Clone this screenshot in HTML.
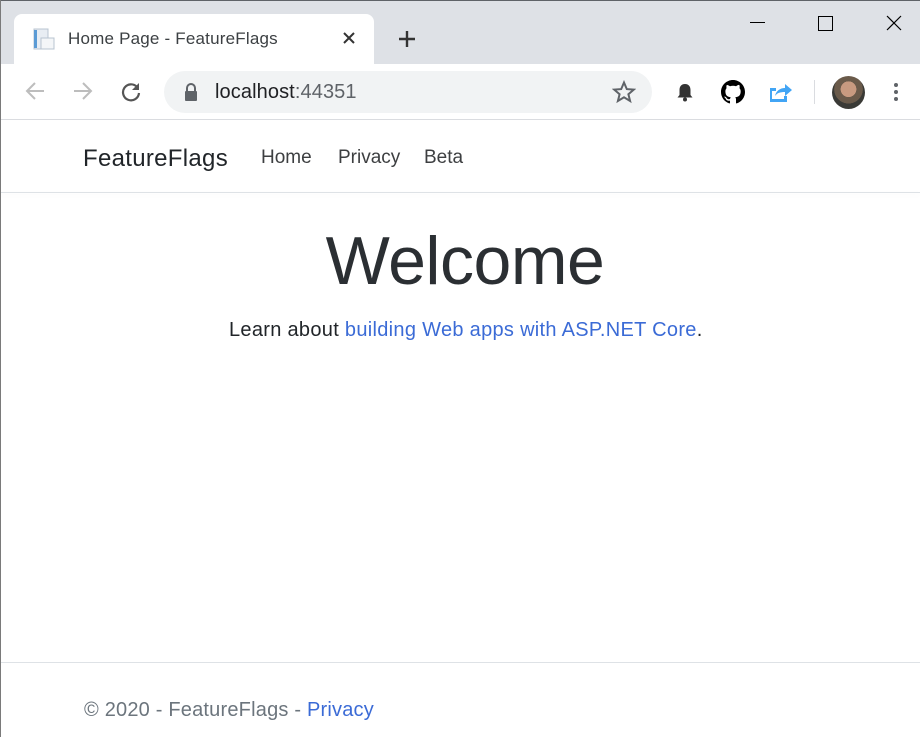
<!DOCTYPE html>
<html><head><meta charset="utf-8"><style>
*{margin:0;padding:0;box-sizing:border-box}
body{width:920px;height:737px;overflow:hidden;background:#fff;font-family:"Liberation Sans",sans-serif;position:relative}
.abs{position:absolute}
</style></head><body>
<div class="abs" style="left:0;top:0;width:920px;height:64px;background:#dee1e6;border-top:1px solid #5f6368"></div>
<div class="abs" style="left:0;top:0;width:1px;height:737px;background:#7a7a7a;z-index:5"></div>
<div class="abs" style="left:14px;top:14px;width:360px;height:51px;background:#fff;border-radius:8px 8px 0 0"></div>
<svg class="abs" style="left:32px;top:27px" width="24" height="24" viewBox="0 0 24 24"><rect x="2" y="2" width="14" height="20" fill="#e8edf3" stroke="#b8c4d0"/><rect x="2" y="3" width="3" height="18" fill="#5b9bd5"/><rect x="9" y="11" width="13" height="11" fill="#f4f6f8" stroke="#b8c4d0"/></svg>
<div class="abs" style="left:68px;top:29px;font-size:17px;color:#3c4043;letter-spacing:0.2px">Home Page - FeatureFlags</div>
<svg class="abs" style="left:342px;top:31px" width="14" height="14" viewBox="0 0 14 14"><path d="M2 2L12 12M12 2L2 12" stroke="#333" stroke-width="2"/></svg>
<svg class="abs" style="left:397px;top:29px" width="20" height="20" viewBox="0 0 20 20"><path d="M10 2V18M2 10H18" stroke="#333" stroke-width="2.4"/></svg>
<div class="abs" style="left:750px;top:22px;width:15px;height:1px;background:#000"></div>
<div class="abs" style="left:818px;top:16px;width:15px;height:15px;border:1px solid #000"></div>
<svg class="abs" style="left:886px;top:15px" width="16" height="16" viewBox="0 0 16 16"><path d="M1 1L15 15M15 1L1 15" stroke="#000" stroke-width="1.2"/></svg>
<div class="abs" style="left:0;top:119px;width:920px;height:1px;background:#dadce0"></div>
<svg class="abs" style="left:24px;top:80px" width="22" height="22" viewBox="0 0 22 22"><path d="M20 11H3M11 3L3 11L11 19" stroke="#bdbdbd" stroke-width="2" fill="none"/></svg>
<svg class="abs" style="left:72px;top:80px" width="22" height="22" viewBox="0 0 22 22"><path d="M2 11H19M11 3L19 11L11 19" stroke="#bdbdbd" stroke-width="2" fill="none"/></svg>
<svg class="abs" style="left:120px;top:80px" width="22" height="22" viewBox="0 0 22 22"><path d="M17 7A8 8 0 1 0 19 13" stroke="#555" stroke-width="2.2" fill="none"/><path d="M19 3V10H12Z" fill="#555"/></svg>
<div class="abs" style="left:164px;top:71px;width:488px;height:42px;background:#f1f3f4;border-radius:21px"></div>
<svg class="abs" style="left:183px;top:82px" width="16" height="20" viewBox="0 0 16 20"><path d="M4 9V6a4 4 0 0 1 8 0v3" stroke="#5f6368" stroke-width="2" fill="none"/><rect x="2" y="9" width="12" height="10" rx="1" fill="#5f6368"/></svg>
<div class="abs" style="left:215px;top:81px;font-size:20px;color:#202124;letter-spacing:0.1px">localhost<span style="color:#5f6368">:44351</span></div>
<svg class="abs" style="left:612px;top:80px" width="24" height="24" viewBox="0 0 24 24"><path d="M12 2.5L14.8 9.1 21.8 9.6 16.4 14.2 18.1 21 12 17.3 5.9 21 7.6 14.2 2.2 9.6 9.2 9.1Z" stroke="#5f6368" stroke-width="2" fill="none"/></svg>
<svg class="abs" style="left:674px;top:81px" width="22" height="22" viewBox="0 0 22 22"><path d="M11 3C7 3 5.5 6 5.5 9V14L3.5 16.5H18.5L16.5 14V9C16.5 6 15 3 11 3Z" fill="#333"/><circle cx="11" cy="18.5" r="2" fill="#333"/></svg>
<svg class="abs" style="left:721px;top:80px" width="24" height="24" viewBox="0 0 16 16"><path fill="#000" d="M8 0C3.58 0 0 3.580 0 8c0 3.54 2.29 6.53 5.47 7.59.4.07.55-.17.55-.38 0-.19-.01-.82-.01-1.490-2.01.37-2.53-.49-2.690-.94-.09-.23-.48-.94-.82-1.13-.28-.15-.68-.52-.01-.53.63-.01 1.08.58 1.23.82.72 1.21 1.87.87 2.33.66.07-.52.28-.87.51-1.07-1.78-.2-3.64-.89-3.64-3.95 0-.87.31-1.59.82-2.15-.08-.2-.36-1.02.08-2.12 0 0 .67-.21 2.2.82.64-.18 1.32-.27 2-.27.68 0 1.36.09 2 .27 1.53-1.04 2.2-.82 2.2-.82.44 1.1.16 1.92.08 2.12.51.56.82 1.27.82 2.15 0 3.07-1.87 3.75-3.65 3.95.29.25.54.73.54 1.48 0 1.07-.01 1.93-.01 2.2 0 .21.15.46.55.38A8.013 8.013 0 0016 8c0-4.42-3.58-8-8-8z"/></svg>
<svg class="abs" style="left:767px;top:80px" width="26" height="24" viewBox="0 0 26 24"><path d="M3 8H9V11H5V19H17V16H20V22H3Z" fill="#42a5f5"/><path d="M8 16C9 11 13 8 18 8V4L25 10L18 16V12C13 12 10 13 8 16Z" fill="#42a5f5"/></svg>
<div class="abs" style="left:814px;top:80px;width:1px;height:24px;background:#dadce0"></div>
<div class="abs" style="left:832px;top:76px;width:33px;height:33px;border-radius:50%;background:radial-gradient(circle at 50% 40%,#c89a80 0 30%,#6a5a4a 31% 55%,#3a3a36 56%);"></div>
<svg class="abs" style="left:890px;top:81px" width="12" height="22" viewBox="0 0 12 22"><circle cx="6" cy="4" r="2" fill="#5f6368"/><circle cx="6" cy="11" r="2" fill="#5f6368"/><circle cx="6" cy="18" r="2" fill="#5f6368"/></svg>
<div class="abs" style="left:0;top:192px;width:920px;height:1px;background:#dee2e6;box-shadow:0 2px 6px rgba(0,0,0,.06)"></div>
<div class="abs" style="left:83px;top:145px;font-size:24px;color:#212529;letter-spacing:0.3px">FeatureFlags</div>
<div class="abs" style="left:261px;top:147px;font-size:19px;color:#3d3f41">Home</div>
<div class="abs" style="left:338px;top:147px;font-size:19px;color:#3d3f41">Privacy</div>
<div class="abs" style="left:424px;top:147px;font-size:19px;color:#3d3f41">Beta</div>
<div class="abs" style="left:0;width:920px;text-align:center;top:222px;font-size:68px;color:#2b2f33;letter-spacing:-0.5px;padding-left:10px">Welcome</div>
<div class="abs" style="left:229px;top:319px;font-size:20px;color:#212529;white-space:nowrap;letter-spacing:0.3px">Learn about <span style="color:#3b6bd6">building Web apps with ASP.NET Core</span>.</div>
<div class="abs" style="left:0;top:662px;width:920px;height:1px;background:#dee2e6"></div>
<div class="abs" style="left:84px;top:699px;font-size:20px;color:#6c757d;white-space:nowrap;letter-spacing:0.2px">© 2020 - FeatureFlags - <span style="color:#3b6bd6">Privacy</span></div>
</body></html>
